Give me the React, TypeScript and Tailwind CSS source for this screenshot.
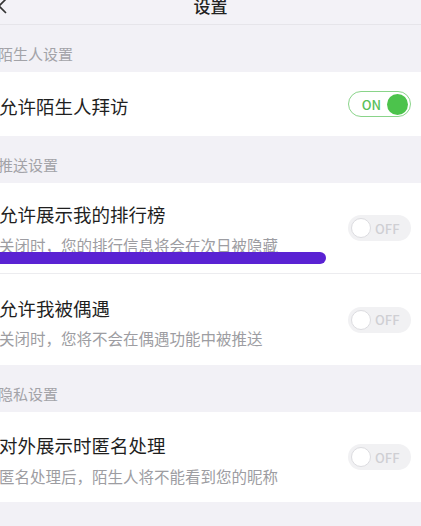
const font = { fontFamily: '"Noto Sans CJK SC", "Noto Sans", sans-serif' };

const SectionHeader = ({ title }: { title: string }) => (
  <div className="h-[47px] flex items-center pt-[11px] bg-[#f2f1f6]">
    <span className="-ml-[2px] text-[15px] text-[#a3a3a8]">{title}</span>
  </div>
);

const Toggle = ({ on }: { on: boolean }) =>
  on ? (
    <div className="w-[63px] h-[26px] rounded-full border border-[#8ad48a] bg-white flex items-center justify-end pr-[2px] gap-[6px]">
      <span className="text-[13px] leading-none text-[#58c058] font-medium">ON</span>
      <span className="w-[21px] h-[21px] rounded-full bg-[#4cc34c]" />
    </div>
  ) : (
    <div className="w-[63px] h-[26px] rounded-full bg-[#f1f1f3] flex items-center pl-[3px] gap-[4px]">
      <span className="w-[20px] h-[20px] rounded-full bg-white border border-[#dcdce0]" />
      <span className="text-[13px] leading-none text-[#cfcfd3] font-medium">OFF</span>
    </div>
  );

const App = () => {
  return (
    <div style={font} className="w-[421px] h-[526px] bg-[#f2f1f6] overflow-hidden">
      {/* nav bar */}
      <div className="relative h-[25px] flex justify-center items-start border-b border-[#e6e5ea] bg-[#f3f2f7]">
        <svg className="absolute left-[-4px] top-[-2px]" width="12" height="17" viewBox="0 0 12 17">
          <path d="M10 1 L3 8 L10 15" fill="none" stroke="#333" strokeWidth="1.6" />
        </svg>
        <div className="text-[17px] leading-[17px] -mt-[3px] text-[#222] font-medium">设置</div>
      </div>

      <SectionHeader title="陌生人设置" />
      <div className="h-[64px] bg-white flex items-center justify-between pr-[10px]">
        <span className="-ml-[1px] pt-[6px] text-[18.5px] text-[#1f1f1f]">允许陌生人拜访</span>
        <Toggle on />
      </div>

      <SectionHeader title="推送设置" />
      <div className="relative h-[91px] bg-white flex items-center justify-between pr-[10px] border-b border-[#ececef]">
        <div className="flex flex-col -ml-[1px]">
          <span className="text-[18.5px] leading-[22px] text-[#1f1f1f]">允许展示我的排行榜</span>
          <span className="mt-[11px] text-[15.5px] leading-[18px] text-[#9d9da2]">关闭时，您的排行信息将会在次日被隐藏</span>
        </div>
        <Toggle on={false} />
        {/* annotation stroke */}
        <div className="absolute left-[-8px] top-[69px] w-[334px] h-[12px] rounded-full bg-[#5a22d3]" />
      </div>
      <div className="h-[91px] bg-white flex items-center justify-between pr-[10px]">
        <div className="flex flex-col -ml-[1px] pt-[4px]">
          <span className="text-[18.5px] leading-[22px] text-[#1f1f1f]">允许我被偶遇</span>
          <span className="mt-[10px] text-[15.5px] leading-[18px] text-[#9d9da2]">关闭时，您将不会在偶遇功能中被推送</span>
        </div>
        <Toggle on={false} />
      </div>

      <SectionHeader title="隐私设置" />
      <div className="h-[90px] bg-white flex items-center justify-between pr-[10px]">
        <div className="flex flex-col -ml-[1px] pt-[4px]">
          <span className="text-[18.5px] leading-[22px] text-[#1f1f1f]">对外展示时匿名处理</span>
          <span className="mt-[11px] text-[15.5px] leading-[18px] text-[#9d9da2]">匿名处理后，陌生人将不能看到您的昵称</span>
        </div>
        <Toggle on={false} />
      </div>
    </div>
  );
};

export default App;
